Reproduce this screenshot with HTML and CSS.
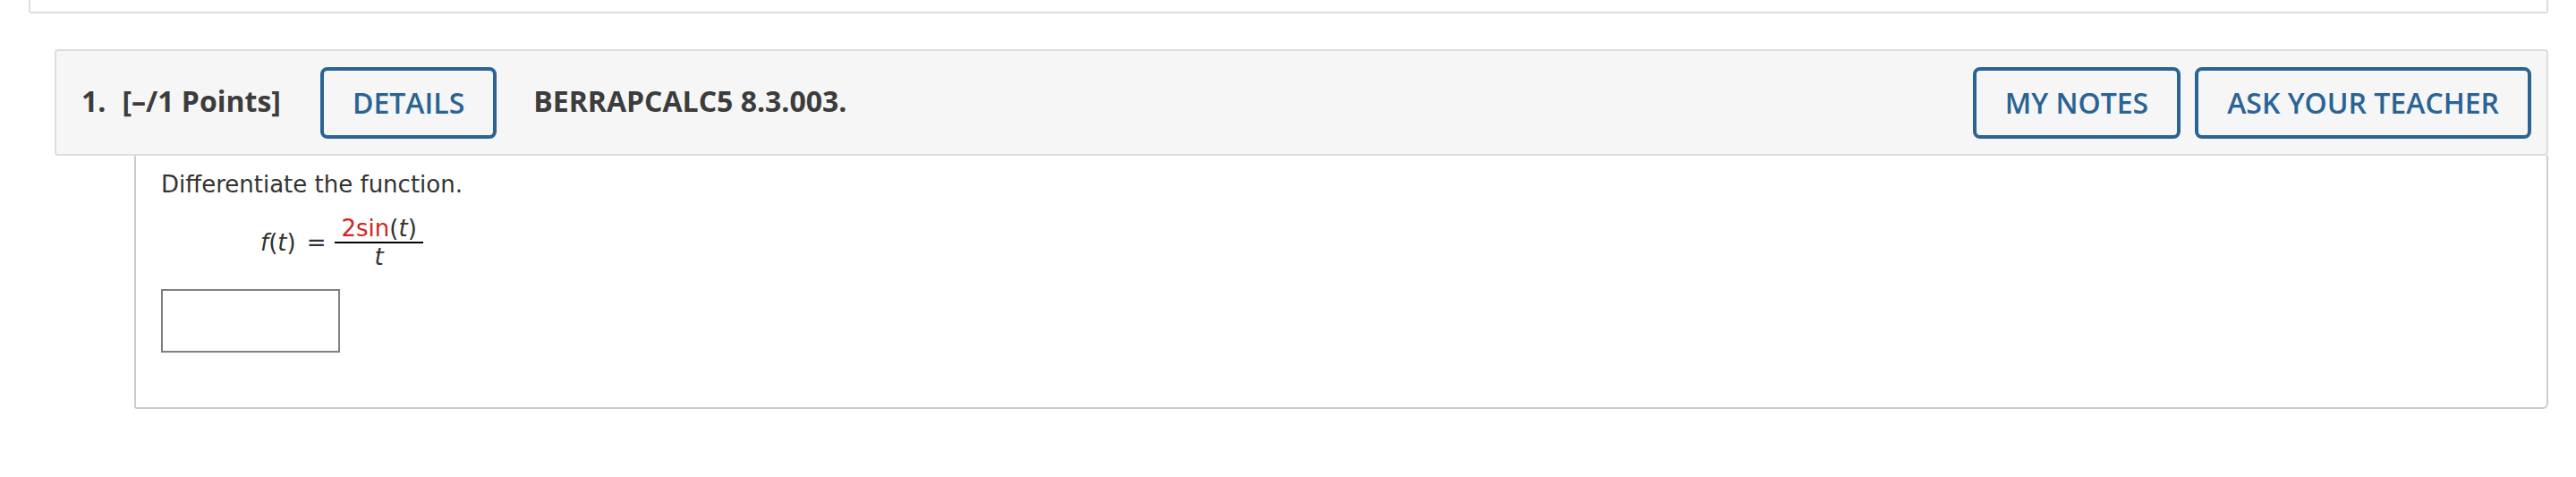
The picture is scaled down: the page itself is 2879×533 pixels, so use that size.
FILE: index.html
```html
<!DOCTYPE html>
<html lang="en">
<head>
<meta charset="utf-8">
<title>Question 1</title>
<link rel="stylesheet" href="styles.css">
</head>
<body>
<div class="page">
  <div class="prev"></div>
  <div class="question">
    <div class="q-head">
      <span class="q-text q-num">1.</span>
      <span class="q-text q-points">[–/1 Points]</span>
      <button class="btn" type="button">DETAILS</button>
      <span class="q-text q-ref">BERRAPCALC5 8.3.003.</span>
      <div class="q-actions">
        <button class="btn" type="button">MY NOTES</button>
        <button class="btn" type="button">ASK YOUR TEACHER</button>
      </div>
    </div>
    <div class="q-body">
      <p class="prompt">Differentiate the function.</p>
      <div class="math">
        <span class="lhs"><i>f</i>(<i>t</i>)</span>
        <span class="eq">=</span>
        <span class="frac">
          <span class="num"><span class="red">2sin</span>(<i>t</i>)</span>
          <span class="den"><i>t</i></span>
        </span>
      </div>
      <input class="answer" type="text" aria-label="answer">
    </div>
  </div>
</div>
</body>
</html>
```
FILE: styles.css
```css
html, body {
  margin: 0;
  background: #ffffff;
}

.page {
  padding: 0 31px 0 32px;
}

.prev {
  height: 13px;
  border: 2px solid #dddddd;
  border-top: 0;
  border-radius: 0 0 3px 3px;
}

.question {
  margin: 40px 0 0 29px;
}

.q-head {
  display: flex;
  align-items: center;
  background: #f6f6f6;
  border: 2px solid #dddddd;
  border-radius: 4px;
  padding: 17.5px 17px 17.5px 28px;
  font-family: "Open Sans", "Liberation Sans", sans-serif;
}

.q-text {
  font-size: 32px;
  font-weight: 700;
  color: #3c3c3c;
  margin-bottom: 5px;
}

.q-num {
  margin-right: 18px;
}

.q-points {
  margin-right: 44px;
}

.q-ref {
  margin-left: 41px;
}

.q-actions {
  margin-left: auto;
  display: flex;
  gap: 16px;
}

.btn {
  box-sizing: border-box;
  height: 80px;
  padding: 0 32px;
  border: 4px solid #2a6395;
  border-radius: 8px;
  background: transparent;
  color: #2a6395;
  font-family: "Open Sans", "Liberation Sans", sans-serif;
  font-size: 32px;
  font-weight: 600;
  line-height: 1;
}

.q-body {
  margin-left: 89px;
  border: 2px solid #cccccc;
  border-top: 0;
  border-radius: 0 0 6px 3px;
  padding: 14px 28px 61px;
  font-family: "DejaVu Sans", Verdana, sans-serif;
  font-size: 26px;
  color: #333333;
}

.prompt {
  margin: 0;
  line-height: 36px;
}

.math {
  display: flex;
  align-items: center;
  margin: 16px 0 21px 111px;
  line-height: 30px;
}

.eq {
  margin: 0 10px 0 12px;
}

.frac {
  display: flex;
  flex-direction: column;
  align-items: stretch;
  text-align: center;
}

.num {
  padding: 0 7px;
  border-bottom: 2px solid #000000;
}

.red {
  color: #d0261d;
}

.answer {
  display: block;
  box-sizing: border-box;
  width: 200px;
  height: 71px;
  margin: 0;
  padding: 0;
  border: 2px solid #808080;
  background: #ffffff;
}
```
